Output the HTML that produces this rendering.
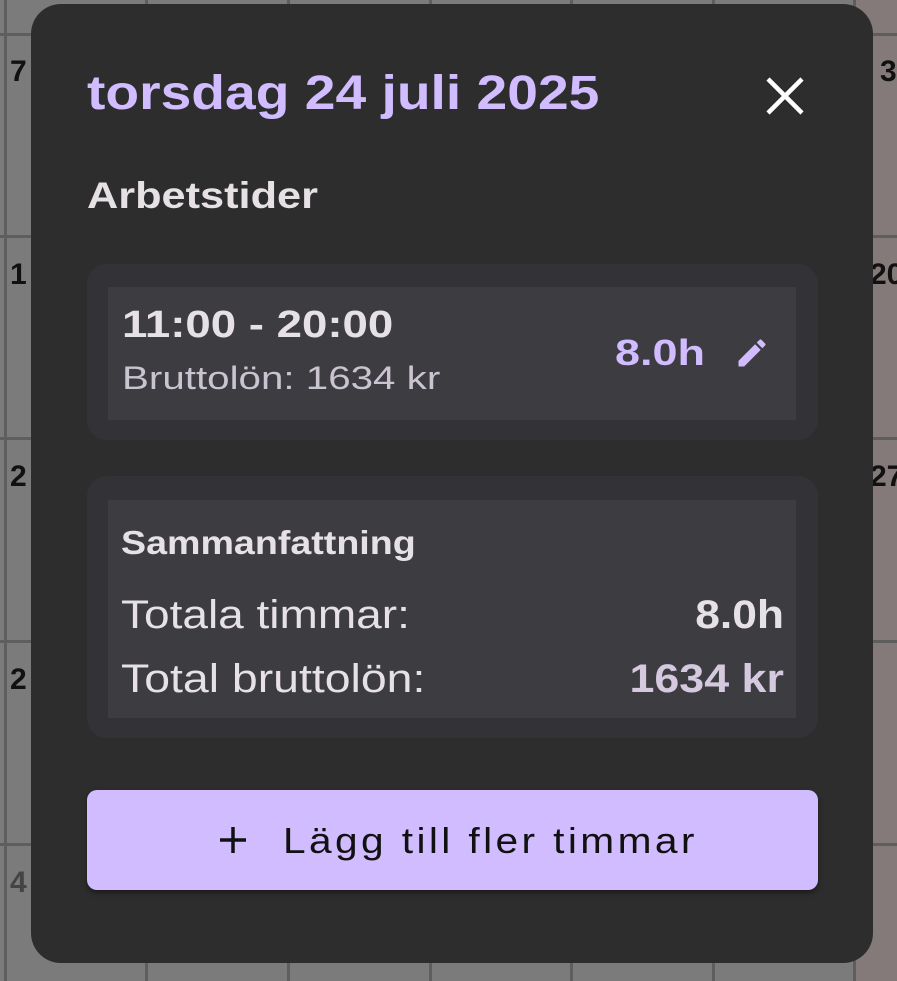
<!DOCTYPE html>
<html><head><meta charset="utf-8"><style>
*{margin:0;padding:0;box-sizing:border-box}
body{width:897px;height:981px;overflow:hidden;background:#7b7b7b;font-family:"Liberation Sans",sans-serif;position:relative}
.vl{position:absolute;top:0;bottom:0;width:3px;background:#5e5e5e}
.hl{position:absolute;left:0;right:0;height:3px;background:#5e5e5e}
.rc{position:absolute;left:853px;right:0;top:0;bottom:0;background:#857a7a}
.n{position:absolute;font-weight:bold;font-size:30px;color:#111}
.modal{position:absolute;left:31px;top:4px;width:842px;height:959px;background:#2d2d2d;border-radius:30px}
.s{position:absolute;white-space:nowrap;transform-origin:left center}
.r{transform-origin:right center}
.t{left:56px;top:62px;font-size:48px;font-weight:bold;color:#d0bcff;transform:scaleX(1.15)}
.h{left:56px;top:171px;font-size:37px;font-weight:bold;color:#e6e1e5;transform:scaleX(1.17)}
.card{position:absolute;left:56px;width:731px;background:#333236;border-radius:20px}
.in{position:absolute;left:21px;right:22px;background:#3d3c41}
</style></head><body>
<div class="rc"></div>
<div class="vl" style="left:4px"></div><div class="vl" style="left:145px"></div><div class="vl" style="left:287px"></div><div class="vl" style="left:429px"></div><div class="vl" style="left:570px"></div><div class="vl" style="left:712px"></div><div class="vl" style="left:853px"></div>
<div class="hl" style="top:33px"></div><div class="hl" style="top:235px"></div><div class="hl" style="top:437px"></div><div class="hl" style="top:640px"></div><div class="hl" style="top:843px"></div>
<div class="n" style="left:10px;top:55px">7</div><div class="n" style="left:10px;top:258px">1</div><div class="n" style="left:10px;top:460px">2</div><div class="n" style="left:10px;top:663px">2</div><div class="n" style="left:10px;top:866px;color:#444">4</div>
<div class="n" style="left:880px;top:55px">3</div><div class="n" style="left:870px;top:258px">20</div><div class="n" style="left:870px;top:460px">27</div>
<div class="modal">
<div class="s t">torsdag 24 juli 2025</div>
<svg style="position:absolute;left:734px;top:72px" width="40" height="40" viewBox="0 0 40 40"><path d="M3 3L37 37M37 3L3 37" stroke="#fff" stroke-width="4.5"/></svg>
<div class="s h">Arbetstider</div>
<div class="card" style="top:260px;height:176px">
<div class="in" style="top:23px;height:133px">
<div class="s" style="left:14px;top:17px;font-size:38px;font-weight:bold;color:#e6e1e5;transform:scaleX(1.2)">11:00 - 20:00</div>
<div class="s" style="left:14px;top:73px;font-size:32px;color:#cac4d0;transform:scaleX(1.26)">Bruttolön: 1634 kr</div>
<div class="s" style="left:507px;top:45px;font-size:36px;font-weight:bold;color:#d0bcff;transform:scaleX(1.25)">8.0h</div>
<svg style="position:absolute;left:626px;top:48px" width="36" height="36" viewBox="0 0 24 24"><path fill="#d0bcff" d="M3 17.25V21h3.75L17.81 9.94l-3.75-3.75L3 17.25zM20.71 7.04a1 1 0 000-1.41l-2.34-2.34a1 1 0 00-1.41 0l-1.830 1.83 3.75 3.75 1.83-1.83z"/></svg>
</div></div>
<div class="card" style="top:472px;height:262px">
<div class="in" style="top:24px;height:218px">
<div class="s" style="left:13px;top:24px;font-size:33px;font-weight:bold;color:#e6e1e5;transform:scaleX(1.14)">Sammanfattning</div>
<div class="s" style="left:13px;top:93px;font-size:40px;color:#e6e1e5;transform:scaleX(1.15)">Totala timmar:</div>
<div class="s r" style="right:12px;top:93px;font-size:40px;font-weight:bold;color:#e6e1e5;transform:scaleX(1.11)">8.0h</div>
<div class="s" style="left:13px;top:157px;font-size:40px;color:#e6e1e5;transform:scaleX(1.16)">Total bruttolön:</div>
<div class="s r" style="right:12px;top:157px;font-size:40px;font-weight:bold;color:#d5c9e0;transform:scaleX(1.12)">1634 kr</div>
</div></div>
<div style="position:absolute;left:56px;top:786px;width:731px;height:100px;background:#d0bcff;border-radius:10px;box-shadow:0 3px 6px rgba(0,0,0,.4)">
<svg style="position:absolute;left:131px;top:35px" width="30" height="30" viewBox="0 0 30 30"><path d="M15 2V28M2 15H28" stroke="#111" stroke-width="3.5"/></svg>
<div class="s" style="left:196px;top:30px;font-size:36px;color:#111;letter-spacing:3px;transform:scaleX(1.13)">Lägg till fler timmar</div>
</div>
</div>
</body></html>
